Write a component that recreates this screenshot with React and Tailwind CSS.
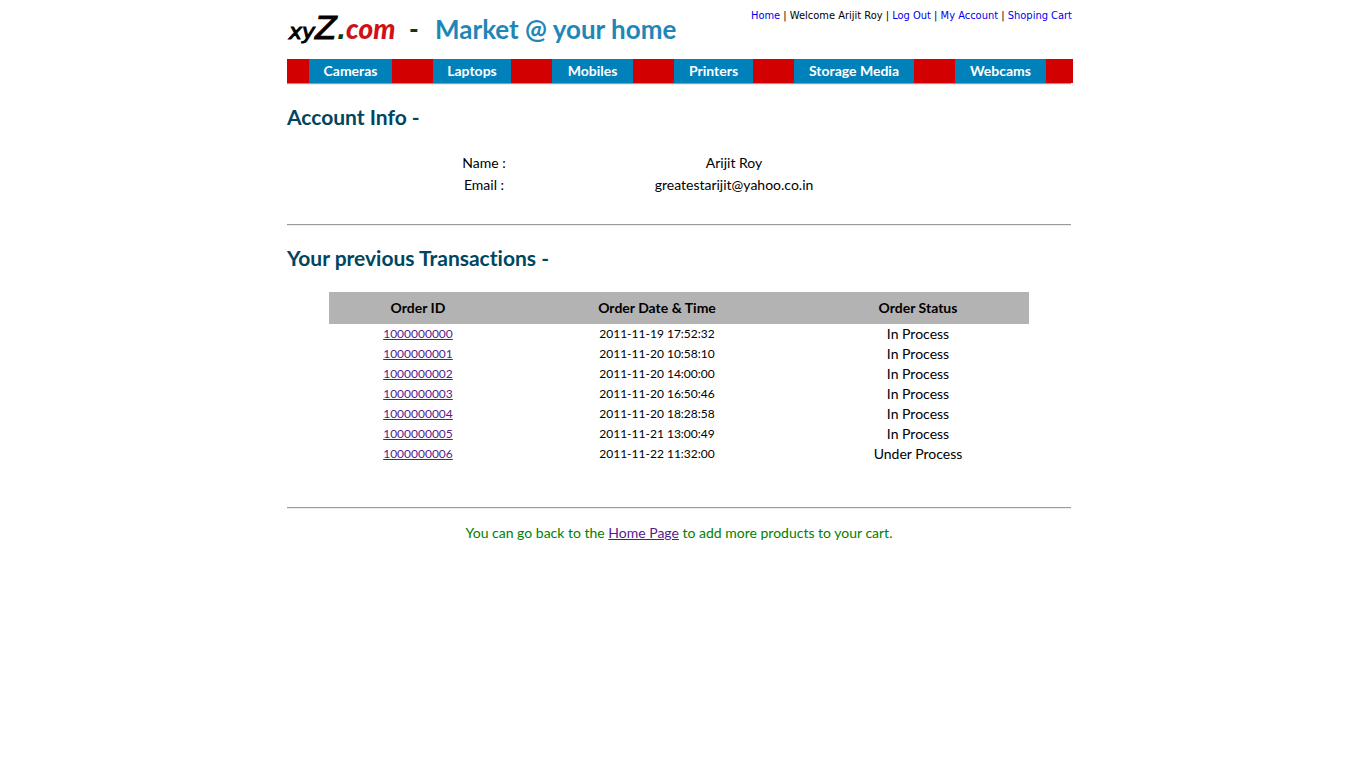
const categories = [
  { name: "Cameras", width: "w-[83px]" },
  { name: "Laptops", width: "w-[78px]" },
  { name: "Mobiles", width: "w-[81px]" },
  { name: "Printers", width: "w-[79px]" },
  { name: "Storage Media", width: "w-[120px]" },
  { name: "Webcams", width: "w-[91px]" },
];

const orders = [
  ["1000000000", "2011-11-19 17:52:32", "In Process"],
  ["1000000001", "2011-11-20 10:58:10", "In Process"],
  ["1000000002", "2011-11-20 14:00:00", "In Process"],
  ["1000000003", "2011-11-20 16:50:46", "In Process"],
  ["1000000004", "2011-11-20 18:28:58", "In Process"],
  ["1000000005", "2011-11-21 13:00:49", "In Process"],
  ["1000000006", "2011-11-22 11:32:00", "Under Process"],
];

function Rule() {
  return <hr className="h-[2px] border-0 border-t border-b border-t-[#9a9a9a] border-b-[#eeeeee]" />;
}

function Logo() {
  return (
    <h1 className="flex items-baseline pl-[2px] pt-[10px] leading-9 whitespace-nowrap">
      <span className="w-[120px] font-['DejaVu_Sans',sans-serif] italic">
        <span className="text-[22px] text-black [-webkit-text-stroke:1px_black]">xy</span>
        <span className="text-[32px] text-black [-webkit-text-stroke:1px_black]">Z</span>
        <span className="text-2xl font-bold text-[#0b3d12]">.</span>
        <span className="font-['Lato',sans-serif] text-[28px] font-black text-[#d01217]">com</span>
      </span>
      <span className="w-[26px] text-[26px] font-black text-[#0b3d12]">-</span>
      <span className="text-[26px] font-bold text-[#1f87b8]">Market @ your home</span>
    </h1>
  );
}

function Account() {
  return (
    <nav className="pt-2 pr-px font-['DejaVu_Sans_Condensed','DejaVu_Sans',sans-serif] text-[11px] leading-4 whitespace-nowrap text-black">
      <a href="#home" className="text-[#0000ee]">Home</a> |{" "}
      Welcome Arijit Roy |{" "}
      <a href="#logout" className="text-[#0000ee]">Log Out</a> |{" "}
      <a href="#account" className="text-[#0000ee]">My Account</a> |{" "}
      <a href="#cart" className="text-[#0000ee]">Shoping Cart</a>
    </nav>
  );
}

export default function App() {
  return (
    <div className="min-h-screen bg-white font-['Lato','Open_Sans',sans-serif] text-sm leading-5 text-black [font-variant-ligatures:none]">
      <div className="mx-auto max-w-[786px]">
        <header className="flex h-[59px] items-start justify-between">
          <Logo />
          <Account />
        </header>

        <nav className="flex gap-[41px] bg-[#d20000] pl-[22px]">
          {categories.map((c) => (
            <a
              key={c.name}
              href="#category"
              className={`${c.width} bg-[#0081ba] text-center leading-6 font-bold whitespace-nowrap text-white`}
            >
              {c.name}
            </a>
          ))}
        </nav>

        <main className="pr-[2px]">
          <Rule />
          <h2 className="pt-4 text-[21px] leading-8 font-bold text-[#00465f]">Account Info -</h2>
          <table className="mx-auto mt-[19px] w-[500px] table-fixed text-center">
            <tbody>
              <tr>
                <th scope="row" className="h-[22px] w-[110px] p-0 font-normal">Name :</th>
                <td className="p-0">Arijit Roy</td>
              </tr>
              <tr>
                <th scope="row" className="h-[22px] p-0 font-normal">Email :</th>
                <td className="p-0">greatestarijit@yahoo.co.in</td>
              </tr>
            </tbody>
          </table>
          <div className="pt-7">
            <Rule />
          </div>

          <h2 className="pt-4 text-[21px] leading-8 font-bold text-[#00465f]">
            Your previous Transactions -
          </h2>
          <table className="mx-auto mt-[18px] w-[700px] table-fixed text-center">
            <thead className="bg-[#b3b3b3]">
              <tr>
                <th scope="col" className="h-8 w-[178px] p-0 font-bold">Order ID</th>
                <th scope="col" className="w-[300px] p-0 font-bold">Order Date &amp; Time</th>
                <th scope="col" className="p-0 font-bold">Order Status</th>
              </tr>
            </thead>
            <tbody>
              {orders.map(([id, date, status]) => (
                <tr key={id}>
                  <td className="h-5 p-0 text-xs leading-5">
                    <a href="#order" className="text-[#551a8b] underline">{id}</a>
                  </td>
                  <td className="p-0 text-xs leading-5">{date}</td>
                  <td className="p-0">{status}</td>
                </tr>
              ))}
            </tbody>
          </table>
          <div className="pt-[43px]">
            <Rule />
          </div>
        </main>

        <footer className="pt-[14px] pr-[2px] text-center text-[#008000]">
          You can go back to the{" "}
          <a href="#home" className="text-[#551a8b] underline">Home Page</a>{" "}
          to add more products to your cart.
        </footer>
      </div>
    </div>
  );
}
